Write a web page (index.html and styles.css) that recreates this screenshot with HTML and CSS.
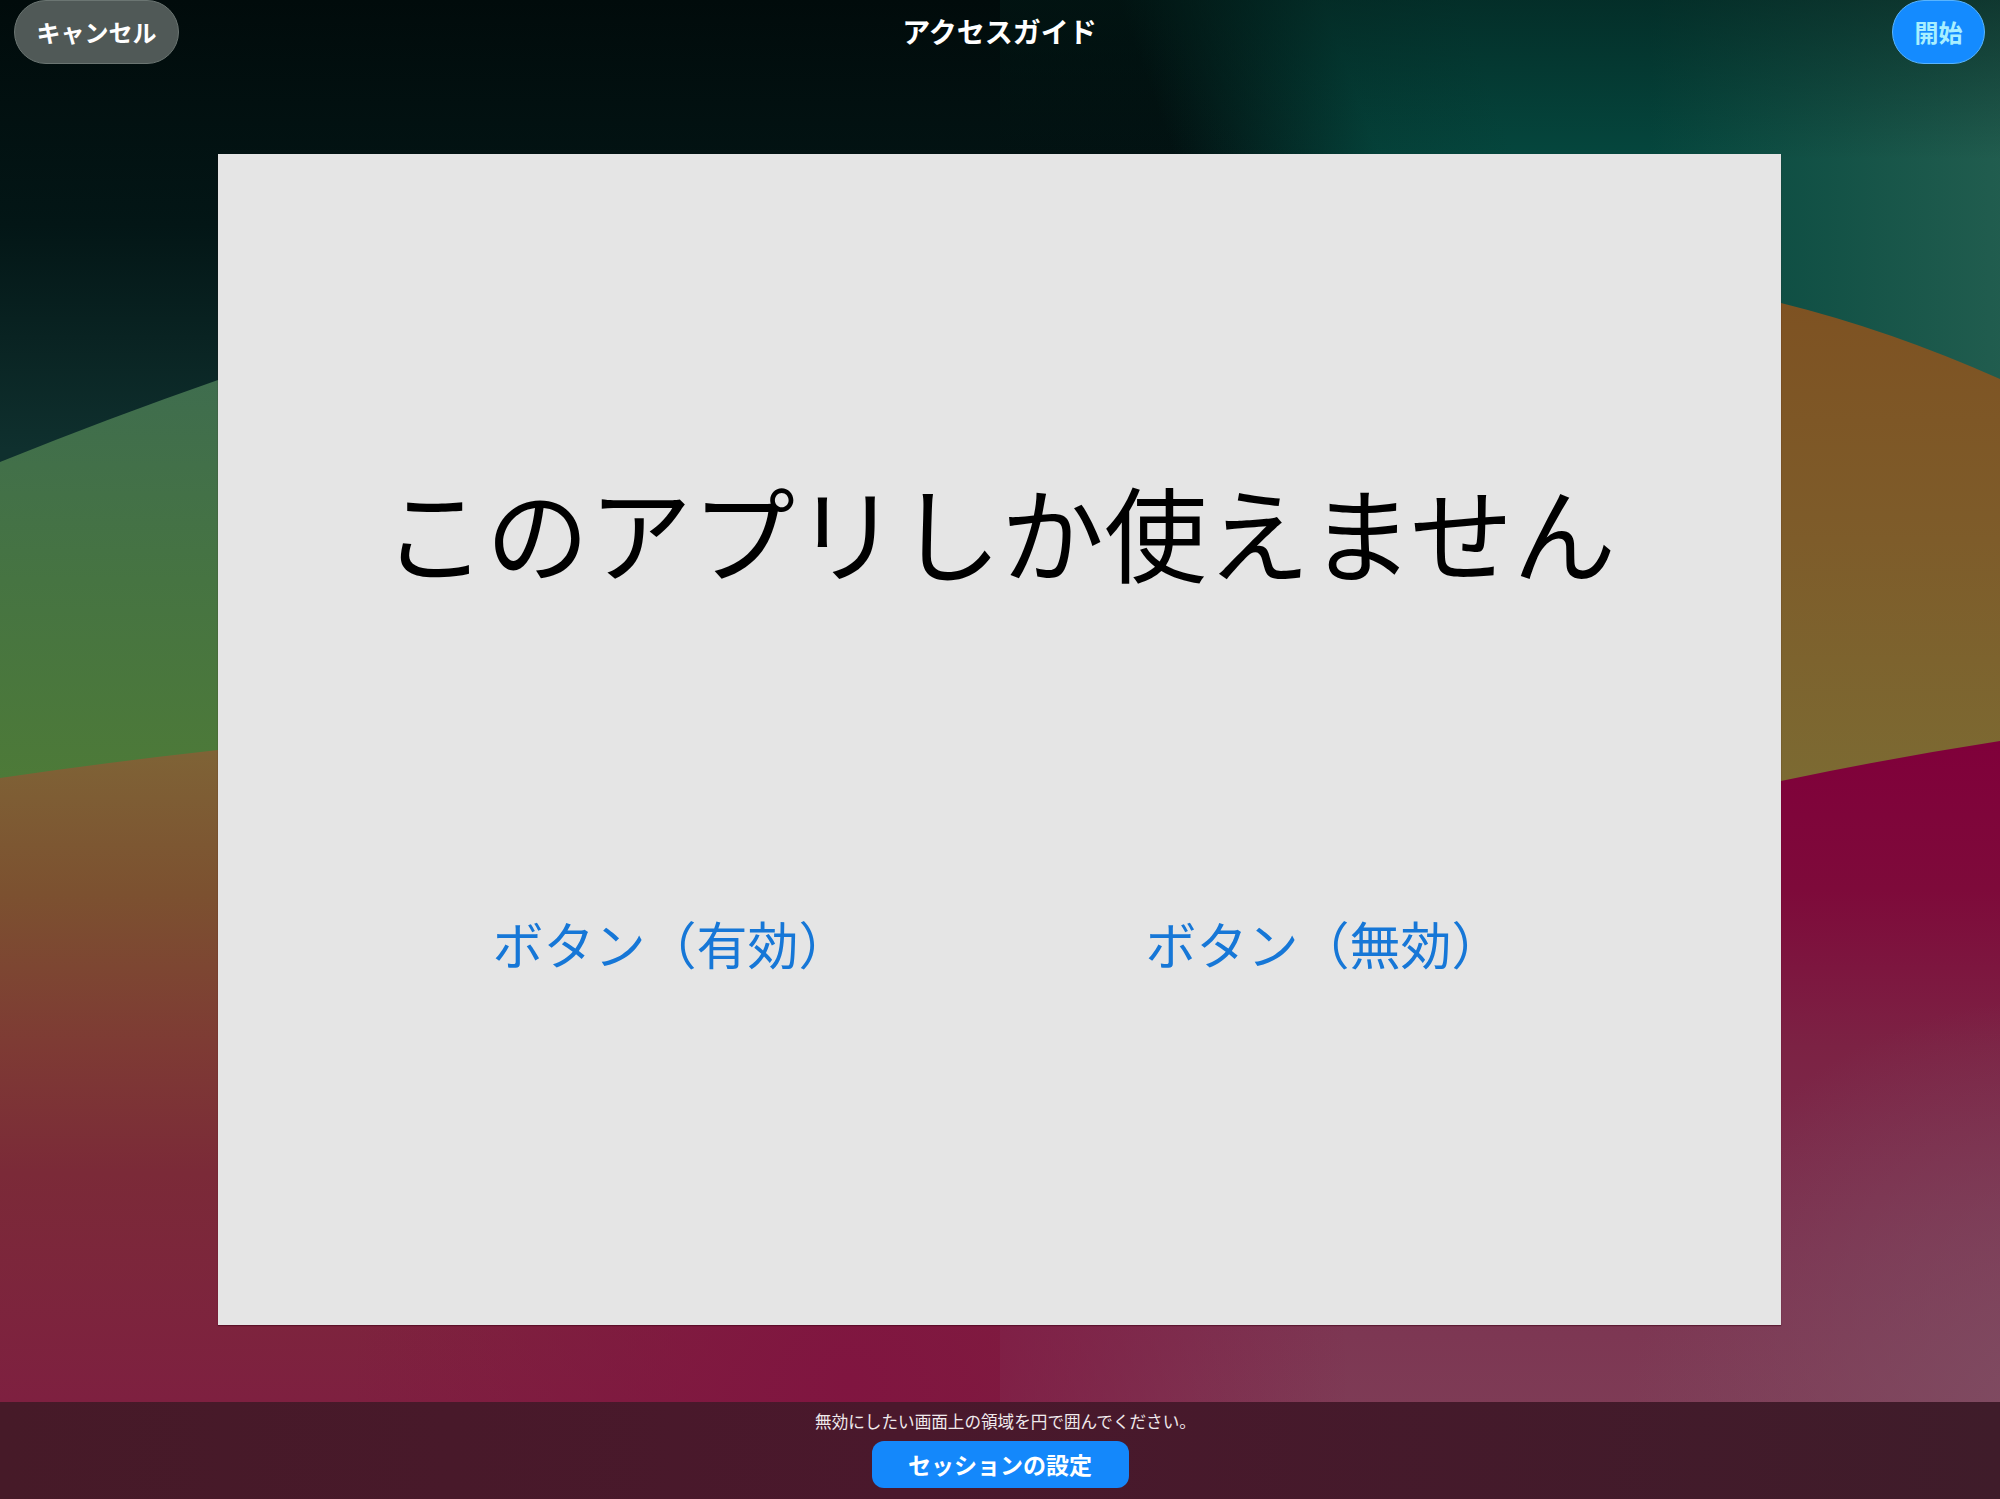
FILE: index.html
```html
<!DOCTYPE html>
<html lang="ja">
<head>
<meta charset="utf-8">
<title>アクセスガイド</title>
<link rel="stylesheet" href="styles.css">
</head>
<body>
<svg class="wallpaper" viewBox="0 0 2000 1499" preserveAspectRatio="none" aria-hidden="true">
  <defs>
    <linearGradient id="sky" x1="0" y1="0" x2="0" y2="1">
      <stop offset="0" stop-color="#010b0b"/>
      <stop offset="0.15" stop-color="#031616"/>
      <stop offset="0.3" stop-color="#0f302e"/>
      <stop offset="1" stop-color="#0f302e"/>
    </linearGradient>
    <linearGradient id="teal" x1="1180" y1="170" x2="1480" y2="60" gradientUnits="userSpaceOnUse">
      <stop offset="0" stop-color="#05473e" stop-opacity="0"/>
      <stop offset="0.6" stop-color="#05473e" stop-opacity="0.9"/>
      <stop offset="1" stop-color="#05473e" stop-opacity="1"/>
    </linearGradient>
    <linearGradient id="tealedge" x1="1650" y1="0" x2="2000" y2="0" gradientUnits="userSpaceOnUse">
      <stop offset="0" stop-color="#2a6454" stop-opacity="0"/>
      <stop offset="1" stop-color="#2a6454" stop-opacity="0.75"/>
    </linearGradient>
    <linearGradient id="tealtop" x1="0" y1="0" x2="0" y2="160" gradientUnits="userSpaceOnUse">
      <stop offset="0" stop-color="#021a17" stop-opacity="0.55"/>
      <stop offset="1" stop-color="#021a17" stop-opacity="0"/>
    </linearGradient>
    <linearGradient id="green" x1="0" y1="380" x2="0" y2="780" gradientUnits="userSpaceOnUse">
      <stop offset="0" stop-color="#3f6d4e"/>
      <stop offset="0.5" stop-color="#467442"/>
      <stop offset="1" stop-color="#4d7a38"/>
    </linearGradient>
    <linearGradient id="leftband" x1="0" y1="750" x2="0" y2="1400" gradientUnits="userSpaceOnUse">
      <stop offset="0" stop-color="#7f6336"/>
      <stop offset="0.22" stop-color="#7c5130"/>
      <stop offset="0.45" stop-color="#7e3b34"/>
      <stop offset="0.65" stop-color="#7b2a38"/>
      <stop offset="1" stop-color="#7e2040"/>
    </linearGradient>
    <linearGradient id="orange" x1="0" y1="300" x2="0" y2="780" gradientUnits="userSpaceOnUse">
      <stop offset="0" stop-color="#7e5222"/>
      <stop offset="0.5" stop-color="#7e5c2a"/>
      <stop offset="1" stop-color="#7c6a32"/>
    </linearGradient>
    <linearGradient id="crimson" x1="0" y1="740" x2="0" y2="1420" gradientUnits="userSpaceOnUse">
      <stop offset="0" stop-color="#80003a"/>
      <stop offset="0.22" stop-color="#7e0a3a"/>
      <stop offset="0.45" stop-color="#7c2244"/>
      <stop offset="0.75" stop-color="#7c3250"/>
      <stop offset="1" stop-color="#7e3c56"/>
    </linearGradient>
    <radialGradient id="corner" cx="2050" cy="1420" r="420" gradientUnits="userSpaceOnUse">
      <stop offset="0" stop-color="#7f4c62"/>
      <stop offset="1" stop-color="#7f4c62" stop-opacity="0"/>
    </radialGradient>
    <radialGradient id="mid" cx="850" cy="1380" r="500" gradientUnits="userSpaceOnUse">
      <stop offset="0" stop-color="#801540"/>
      <stop offset="1" stop-color="#801540" stop-opacity="0"/>
    </radialGradient>
  </defs>
  <rect x="0" y="0" width="2000" height="1499" fill="url(#sky)"/>
  <rect x="0" y="0" width="2000" height="700" fill="url(#teal)"/>
  <rect x="0" y="0" width="2000" height="700" fill="url(#tealedge)"/>
  <rect x="1000" y="0" width="1000" height="160" fill="url(#tealtop)"/>
  <path d="M0 462 Q109 418 218 380 L1000 300 L1000 1499 L0 1499 Z" fill="url(#green)"/>
  <path d="M0 778 Q109 762 218 750 L1000 740 L1000 1499 L0 1499 Z" fill="url(#leftband)"/>
  <path d="M1000 300 L1781 303 Q1890 330 2000 379 L2000 1499 L1000 1499 Z" fill="url(#orange)"/>
  <path d="M1000 790 L1781 781 Q1890 758 2000 741 L2000 1499 L1000 1499 Z" fill="url(#crimson)"/>
  <rect x="0" y="0" width="2000" height="1499" fill="url(#mid)"/>
  <rect x="0" y="0" width="2000" height="1499" fill="url(#corner)"/>
</svg>

<div class="screen">
  <header class="topbar">
    <div class="left"><button class="pill cancel">キャンセル</button></div>
    <h1 class="title">アクセスガイド</h1>
    <div class="right"><button class="pill start">開始</button></div>
  </header>

  <main class="panel">
    <p class="headline">このアプリしか使えません</p>
    <div class="links">
      <span class="link">ボタン（有効）</span>
      <span class="link">ボタン（無効）</span>
    </div>
  </main>

  <footer class="bottombar">
    <p class="hint">無効にしたい画面上の領域を円で囲んでください。</p>
    <button class="session">セッションの設定</button>
  </footer>
</div>
</body>
</html>
```

FILE: styles.css
```css
html, body {
  margin: 0;
  padding: 0;
  width: 2000px;
  height: 1499px;
  overflow: hidden;
  background: #031616;
  font-family: "Noto Sans CJK JP", "Noto Sans", sans-serif;
}

.wallpaper {
  position: absolute;
  left: 0;
  top: 0;
  width: 2000px;
  height: 1499px;
  z-index: 0;
}

.screen {
  position: relative;
  z-index: 1;
  width: 2000px;
  height: 1499px;
  display: flex;
  flex-direction: column;
}

.topbar {
  height: 154px;
  display: grid;
  grid-template-columns: 1fr auto 1fr;
  align-items: start;
  padding: 0 15px 0 14px;
  box-sizing: border-box;
}

.left { display: flex; justify-content: flex-start; }
.right { display: flex; justify-content: flex-end; }

.pill {
  height: 64px;
  border-radius: 32px;
  font-family: "Noto Sans CJK JP", sans-serif;
  font-weight: 700;
  font-size: 24px;
  line-height: 1;
  display: flex;
  align-items: center;
  justify-content: center;
  padding: 0;
  margin: 0;
  box-sizing: border-box;
}

.cancel {
  width: 165px;
  background: #505957;
  color: #ffffff;
  border: 1.5px solid #6b7572;
}

.start {
  width: 93px;
  background: #148bff;
  color: #a8efff;
  border: 1.5px solid #58b4ff;
}

.title {
  margin: 15px 0 0 0;
  font-size: 28px;
  font-weight: 700;
  line-height: 32px;
  color: #ffffff;
  letter-spacing: 0;
}

.panel {
  margin-left: 218px;
  width: 1563px;
  height: 1171px;
  background: #e5e5e5;
  box-shadow: 0 1px 1px rgba(60, 0, 20, 0.5);
  display: flex;
  flex-direction: column;
  align-items: center;
}

.headline {
  margin: 325px 0 0 0;
  font-size: 103px;
  line-height: 1;
  color: #000000;
  font-weight: 400;
  white-space: nowrap;
}

.links {
  margin-top: 336px;
  display: flex;
  gap: 296px;
  margin-left: -4px;
}

.link {
  font-size: 51px;
  line-height: 1;
  color: #1677d7;
  white-space: nowrap;
}

.bottombar {
  margin-top: auto;
  height: 97px;
  background: linear-gradient(90deg, #461a28 0%, #4a182c 45%, #3f1c2a 100%);
  display: flex;
  flex-direction: column;
  align-items: center;
}

.hint {
  margin: 7px 0 0 0;
  padding-left: 11px;
  font-size: 16.6px;
  line-height: 24px;
  color: #f0eaec;
}

.session {
  margin-top: 8px;
  width: 257px;
  height: 47px;
  border-radius: 12px;
  border: none;
  background: #1488fb;
  color: #ffffff;
  font-family: "Noto Sans CJK JP", sans-serif;
  font-weight: 700;
  font-size: 23px;
  line-height: 1;
  padding: 0;
}
```
